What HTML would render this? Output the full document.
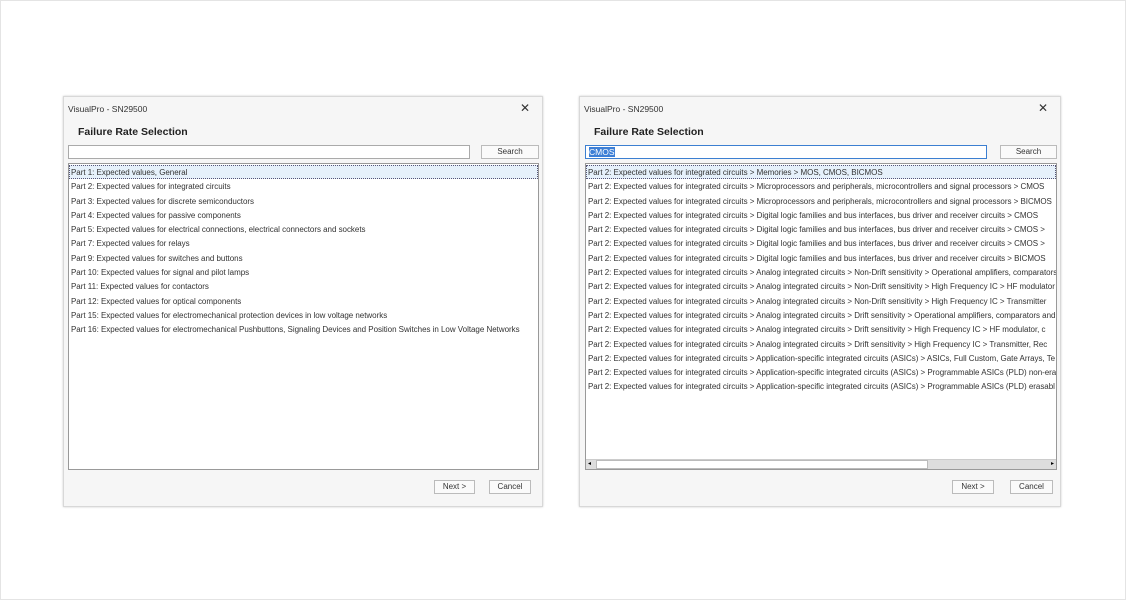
<!DOCTYPE html><html><head><style>
*{margin:0;padding:0;box-sizing:border-box}
body{width:1126px;height:600px;background:#fff;position:relative;font-family:"Liberation Sans",sans-serif;overflow:hidden}
.frame{position:absolute;left:0;top:0;width:1126px;height:600px;border:1px solid #e4e4e4}
.dlg{position:absolute;top:96px;width:480px;height:411px;background:#f6f6f6;border:1px solid #d8d8d8;box-shadow:0 0 2px #ccc}
.t{position:absolute;left:4px;top:7px;font-size:8.5px;color:#333}
.x{position:absolute;right:12px;top:4px;font-size:12px;color:#333}
.h{position:absolute;left:14px;top:29px;font-size:10.5px;font-weight:bold;color:#222}
.in{position:absolute;top:48px;height:14px;background:#fff;border:1px solid #aaa;font-size:8.5px;padding-left:3px;line-height:12px}
.btn{position:absolute;height:14px;background:#fafafa;border:1px solid #bbb;font-size:8px;text-align:center;line-height:12px;color:#333}
.list{position:absolute;top:66px;height:307px;background:#fff;border:1px solid #999;overflow:hidden;padding-top:1px}
.r{height:14.3px;line-height:15px;font-size:8px;color:#333;padding-left:2px;white-space:nowrap;overflow:hidden;letter-spacing:-0.03px}
.sel{background:#e6f1fb;outline:1px dotted #557;outline-offset:-1px}
.sb{position:absolute;left:0;right:0;bottom:0;height:10px;background:#ddd;border-top:1px solid #ccc}
</style></head><body><div class="frame"></div>
<div class="dlg" style="left:63px">
<div class="t">VisualPro - SN29500</div><div class="x">✕</div>
<div class="h">Failure Rate Selection</div>
<div class="in" style="left:4px;width:402px"></div>
<div class="btn" style="left:417px;top:48px;width:58px">Search</div>
<div class="list" style="left:4px;width:471px">
<div class="r sel">Part 1: Expected values, General</div>
<div class="r">Part 2: Expected values for integrated circuits</div>
<div class="r">Part 3: Expected values for discrete semiconductors</div>
<div class="r">Part 4: Expected values for passive components</div>
<div class="r">Part 5: Expected values for electrical connections, electrical connectors and sockets</div>
<div class="r">Part 7: Expected values for relays</div>
<div class="r">Part 9: Expected values for switches and buttons</div>
<div class="r">Part 10: Expected values for signal and pilot lamps</div>
<div class="r">Part 11: Expected values for contactors</div>
<div class="r">Part 12: Expected values for optical components</div>
<div class="r">Part 15: Expected values for electromechanical protection devices in low voltage networks</div>
<div class="r">Part 16: Expected values for electromechanical Pushbuttons, Signaling Devices and Position Switches in Low Voltage Networks</div>
</div>
<div class="btn" style="left:370px;top:383px;width:41px">Next &gt;</div>
<div class="btn" style="left:425px;top:383px;width:42px">Cancel</div>
</div>
<div class="dlg" style="left:579px;width:482px">
<div class="t">VisualPro - SN29500</div><div class="x">✕</div>
<div class="h">Failure Rate Selection</div>
<div class="in" style="left:5px;width:402px;border-color:#3c7fd1"><span style="background:#3d7fd6;color:#fff">CMOS</span></div>
<div class="btn" style="left:420px;top:48px;width:57px">Search</div>
<div class="list" style="left:5px;width:472px">
<div class="r sel">Part 2: Expected values for integrated circuits &gt; Memories &gt; MOS, CMOS, BICMOS</div>
<div class="r">Part 2: Expected values for integrated circuits &gt; Microprocessors and peripherals, microcontrollers and signal processors &gt; CMOS</div>
<div class="r">Part 2: Expected values for integrated circuits &gt; Microprocessors and peripherals, microcontrollers and signal processors &gt; BICMOS</div>
<div class="r">Part 2: Expected values for integrated circuits &gt; Digital logic families and bus interfaces, bus driver and receiver circuits &gt; CMOS</div>
<div class="r">Part 2: Expected values for integrated circuits &gt; Digital logic families and bus interfaces, bus driver and receiver circuits &gt; CMOS &gt;</div>
<div class="r">Part 2: Expected values for integrated circuits &gt; Digital logic families and bus interfaces, bus driver and receiver circuits &gt; CMOS &gt;</div>
<div class="r">Part 2: Expected values for integrated circuits &gt; Digital logic families and bus interfaces, bus driver and receiver circuits &gt; BICMOS</div>
<div class="r">Part 2: Expected values for integrated circuits &gt; Analog integrated circuits &gt; Non-Drift sensitivity &gt; Operational amplifiers, comparators</div>
<div class="r">Part 2: Expected values for integrated circuits &gt; Analog integrated circuits &gt; Non-Drift sensitivity &gt; High Frequency IC &gt; HF modulator</div>
<div class="r">Part 2: Expected values for integrated circuits &gt; Analog integrated circuits &gt; Non-Drift sensitivity &gt; High Frequency IC &gt; Transmitter</div>
<div class="r">Part 2: Expected values for integrated circuits &gt; Analog integrated circuits &gt; Drift sensitivity &gt; Operational amplifiers, comparators and</div>
<div class="r">Part 2: Expected values for integrated circuits &gt; Analog integrated circuits &gt; Drift sensitivity &gt; High Frequency IC &gt; HF modulator, c</div>
<div class="r">Part 2: Expected values for integrated circuits &gt; Analog integrated circuits &gt; Drift sensitivity &gt; High Frequency IC &gt; Transmitter, Rec</div>
<div class="r">Part 2: Expected values for integrated circuits &gt; Application-specific integrated circuits (ASICs) &gt; ASICs, Full Custom, Gate Arrays, Te</div>
<div class="r">Part 2: Expected values for integrated circuits &gt; Application-specific integrated circuits (ASICs) &gt; Programmable ASICs (PLD) non-era</div>
<div class="r">Part 2: Expected values for integrated circuits &gt; Application-specific integrated circuits (ASICs) &gt; Programmable ASICs (PLD) erasabl</div>
<div class="sb"><div style="position:absolute;left:10px;top:0;width:332px;height:9px;background:#fff;border:1px solid #bbb"></div><span style="position:absolute;left:2px;top:0;font-size:6px">◂</span><span style="position:absolute;right:2px;top:0;font-size:6px">▸</span></div>
</div>
<div class="btn" style="left:372px;top:383px;width:42px">Next &gt;</div>
<div class="btn" style="left:430px;top:383px;width:43px">Cancel</div>
</div>
</body></html>
